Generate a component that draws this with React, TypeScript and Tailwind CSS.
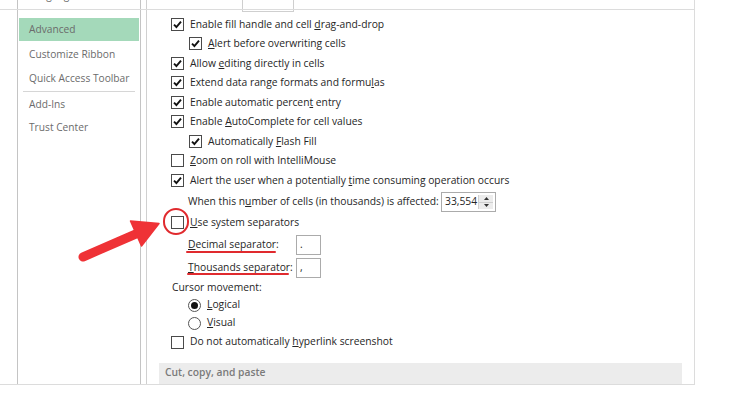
import type { ReactNode } from 'react';

const font = "font-['Open_Sans','Noto_Sans',sans-serif]";

function Box({ checked }: { checked?: boolean }) {
    return (
        <span className="w-[13px] h-[13px] border border-[#4a4a4a] bg-white flex items-center justify-center shrink-0">
            {checked && (
                <svg width="11" height="11" viewBox="0 0 11 11">
                    <path d="M2 5.6 L4.4 8 L9 2.6" fill="none" stroke="#111" strokeWidth="1.9" />
                </svg>
            )}
        </span>
    );
}

function Radio({ on }: { on?: boolean }) {
    return (
        <span className="w-[13px] h-[13px] rounded-full border border-[#555] bg-white flex items-center justify-center shrink-0">
            {on && <span className="w-[7px] h-[7px] rounded-full bg-[#111]" />}
        </span>
    );
}

function CheckRow({ checked, className, children }: { checked?: boolean; className: string; children: ReactNode }) {
    return (
        <div className={'flex items-center gap-[6px] ' + className}>
            <Box checked={checked} />
            <span className="whitespace-nowrap">{children}</span>
        </div>
    );
}

export default function App() {
    return (
        <div className={'relative w-[729px] h-[415px] bg-white overflow-hidden text-[10.3px] text-[#262626] ' + font}>
            <div className="flex w-[695px] h-[385px] border-r border-b border-[#dcdcdc]">
                {/* left nav */}
                <div className="w-[17px] shrink-0" />
                <div className="w-[124px] shrink-0 border-x border-[#c4c4c4] px-px overflow-hidden text-[#6b6b6b] text-[10.2px] whitespace-nowrap">
                    <div className="h-[24px] -mt-[16px] pl-[10px] flex items-center">Language</div>
                    <div className="h-[23px] mt-[10px] pl-[10px] flex items-center bg-[#a4d9ba]">Advanced</div>
                    <div className="h-[24px] mt-[2px] pl-[10px] flex items-center">Customize Ribbon</div>
                    <div className="h-[24px] pl-[10px] flex items-center">Quick Access Toolbar</div>
                    <div className="h-px mx-[4px] bg-[#d6d6d6]" />
                    <div className="h-[23px] mt-px pl-[10px] flex items-center">Add-Ins</div>
                    <div className="h-[24px] pl-[10px] flex items-center">Trust Center</div>
                </div>
                <div className="w-[5px] shrink-0" />

                {/* options panel */}
                <div className="flex-1 border-l border-[#d0d0d0] overflow-hidden flex flex-col">
                    <div className="ml-[95px] w-[52px] h-[12px] border border-t-0 border-[#cfcfcf] shrink-0" />
                    <div className="pl-[24px] flex flex-col">
                        <CheckRow checked className="h-[19.5px] mt-[2.5px]">
                            Enable fill handle and cell <u>d</u>rag-and-drop
                        </CheckRow>
                        <CheckRow checked className="h-[19.5px] pl-[18px]">
                            <u>A</u>lert before overwriting cells
                        </CheckRow>
                        <CheckRow checked className="h-[19.5px]">
                            Allow <u>e</u>diting directly in cells
                        </CheckRow>
                        <CheckRow checked className="h-[19.5px]">
                            Extend data range formats and formu<u>l</u>as
                        </CheckRow>
                        <CheckRow checked className="h-[19.5px]">
                            Enable automatic percen<u>t</u> entry
                        </CheckRow>
                        <CheckRow checked className="h-[19.5px]">
                            Enable <u>A</u>utoComplete for cell values
                        </CheckRow>
                        <CheckRow checked className="h-[19.5px] pl-[18px]">
                            Automatically <u>F</u>lash Fill
                        </CheckRow>
                        <CheckRow className="h-[19.5px]">
                            <u>Z</u>oom on roll with IntelliMouse
                        </CheckRow>
                        <CheckRow checked className="h-[19.5px]">
                            Alert the user when a potentially <u>t</u>ime consuming operation occurs
                        </CheckRow>

                        <div className="flex items-center h-[20px] mt-[2px] pl-[17px]">
                            <span className="whitespace-nowrap w-[253px]">
                                When this n<u>u</u>mber of cells (in thousands) is affected:
                            </span>
                            <div className="flex h-[20px] border border-[#ababab]">
                                <span className="w-[36px] pl-[3px] flex items-center">33,554</span>
                                <div className="w-[15px] flex flex-col border-l border-[#d0d0d0] bg-[#ececec] my-[2px] mr-[2px]">
                                    <span className="flex-1 flex items-center justify-center border-b border-[#cfcfcf]">
                                        <svg width="5" height="3" viewBox="0 0 5 3"><path d="M0 3 L2.5 0 L5 3Z" fill="#333" /></svg>
                                    </span>
                                    <span className="flex-1 flex items-center justify-center">
                                        <svg width="5" height="3" viewBox="0 0 5 3"><path d="M0 0 L2.5 3 L5 0Z" fill="#333" /></svg>
                                    </span>
                                </div>
                            </div>
                        </div>

                        <CheckRow className="h-[19.5px] mt-px">
                            <u>U</u>se system separators
                        </CheckRow>

                        <div className="flex items-center h-[20px] mt-[2px] pl-[17px]">
                            <span className="w-[108px] whitespace-nowrap"><u>D</u>ecimal separator:</span>
                            <span className="w-[25px] h-[20px] border border-[#ababab] pl-[3px] flex items-center">.</span>
                        </div>
                        <div className="flex items-center h-[20px] mt-[3px] pl-[17px]">
                            <span className="w-[108px] whitespace-nowrap"><u>T</u>housands separator:</span>
                            <span className="w-[25px] h-[20px] border border-[#ababab] pl-[3px] flex items-center">,</span>
                        </div>

                        <div className="h-[18px] mt-px flex items-center pl-px">Cursor movement:</div>
                        <div className="h-[17px] flex items-center gap-[6px] pl-[17px]">
                            <Radio on />
                            <span><u>L</u>ogical</span>
                        </div>
                        <div className="h-[19px] flex items-center gap-[6px] pl-[17px]">
                            <Radio />
                            <span><u>V</u>isual</span>
                        </div>
                        <CheckRow className="h-[19px]">
                            Do not automatically <u>h</u>yperlink screenshot
                        </CheckRow>
                    </div>

                    <div className="mt-[11px] ml-[12px] mr-[12px] h-[21px] bg-[#ececec] pl-[6px] flex items-center font-semibold text-[#7a7a7a]">
                        Cut, copy, and paste
                    </div>
                </div>
            </div>

            {/* top edge of the cropped window */}
            <div className="absolute left-0 top-[9px] w-[695px] h-px bg-[#dcdcdc]" />

            {/* annotations */}
            <div className="absolute left-[186px] top-[251px] w-[90px] h-[2px] bg-[#e02a2e] rounded" />
            <div className="absolute left-[187px] top-[273px] w-[102px] h-[2px] bg-[#e02a2e] rounded" />
            <div className="absolute left-[163px] top-[208px] w-[26px] h-[27px] rounded-full border-2 border-[#e02a2e]" />
            <svg className="absolute left-0 top-0" width="729" height="415" viewBox="0 0 729 415">
                <line x1="83" y1="257" x2="137" y2="233.5" stroke="#ef3236" strokeWidth="9" strokeLinecap="round" />
                <path d="M159 223.5 L130.5 221 L141.5 246 Z" fill="#ef3236" stroke="#ef3236" strokeWidth="1.5" strokeLinejoin="round" />
            </svg>
        </div>
    );
}
